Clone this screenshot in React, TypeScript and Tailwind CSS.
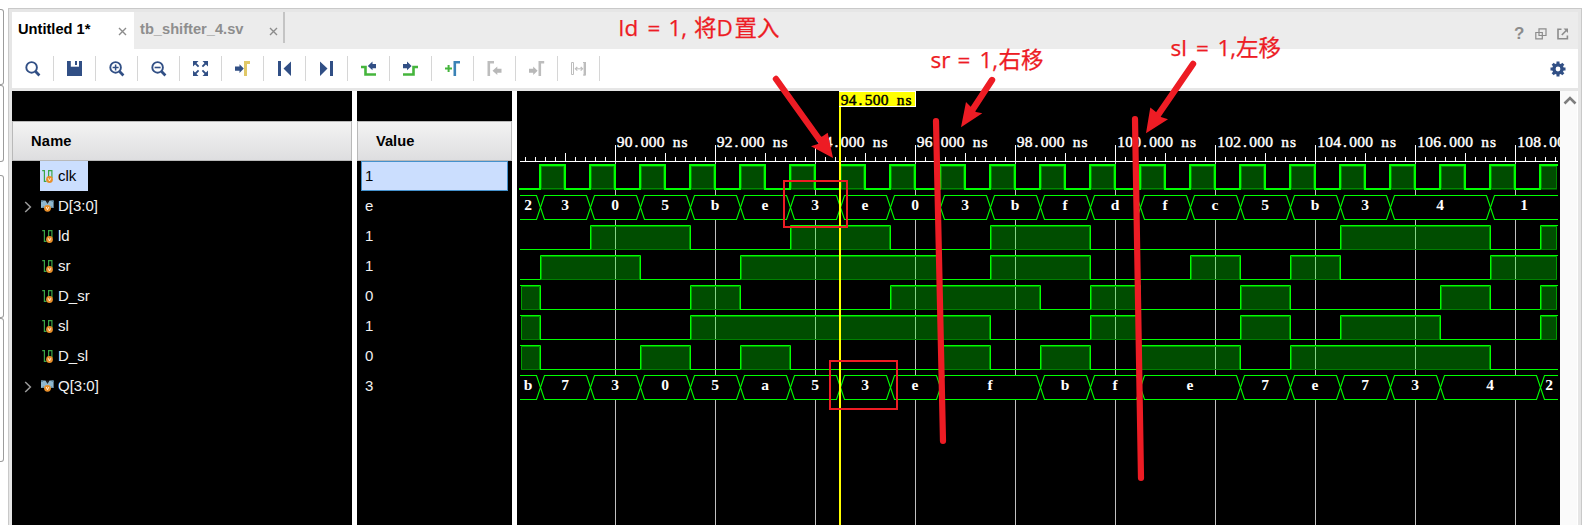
import React from 'react';

const NAVY = '#314f85';
const SERIF = '"Liberation Serif", serif';

/* ---------- toolbar icons (16 x 16 grid) ---------- */

const Lens = ({ children }: { children?: React.ReactNode }) => (
  <g stroke={NAVY} fill="none">
    <circle cx="6.6" cy="6.4" r="5.3" strokeWidth="1.9" />
    <path d="M10.6 10.6 L14.4 14.4" strokeWidth="2.8" />
    {children}
  </g>
);

const icons: React.ReactNode[] = [
  <Lens />,
  <g>
    <path d="M0 0 H15 V15 H0 Z" fill={NAVY} />
    <path d="M3.8 0 H12 V5.7 H3.8 Z" fill="#fff" />
    <path d="M8 0 H10 V4 H8 Z" fill={NAVY} />
  </g>,
  <Lens>
    <path d="M3.6 6.5 H9.6 M6.6 3.5 V9.5" strokeWidth="1.5" />
  </Lens>,
  <Lens>
    <path d="M3.6 6.5 H9.6" strokeWidth="1.6" />
  </Lens>,
  <g fill={NAVY} stroke={NAVY}>
    <path stroke="none" d="M0 0H5.5L0 5.5Z M15 0V5.5L9.5 0Z M0 15V9.5L5.5 15Z M15 15H9.5L15 9.5Z" />
    <path strokeWidth="1.8" d="M2 2L5.6 5.6M13 2L9.4 5.6M2 13L5.6 9.4M13 13L9.4 9.4" />
  </g>,
  <g>
    <path d="M0 5.5H4.5V3.3L8.8 7.6L4.5 12V9.8H0Z" fill={NAVY} />
    <path d="M10.5 15V1.5H15" stroke="#e0c868" strokeWidth="3" fill="none" />
  </g>,
  <path d="M1 0H4V15H1Z M14 0.5V15L6.5 7.5Z" fill={NAVY} />,
  <path d="M14 0H11V15H14Z M1 0.5V15L8.5 7.5Z" fill={NAVY} />,
  <g>
    <path d="M0 6H4.5V13.5H15" stroke="#45b53c" strokeWidth="2.6" fill="none" />
    <path d="M15 2.9H11.5V0.6L6.8 5L11.5 9.2V7.2H15Z" fill={NAVY} />
  </g>,
  <g>
    <path d="M0 13.5H10.5V6H15" stroke="#45b53c" strokeWidth="2.6" fill="none" />
    <path d="M0 2.9H4V0.6L8.6 5L4 9.2V7.2H0Z" fill={NAVY} />
  </g>,
  <g fill="none">
    <path d="M0 7.5H7M3.6 4V11" stroke="#45b53c" strokeWidth="2" />
    <path d="M9.8 15V1.3H15" stroke="#3a82b6" strokeWidth="2.6" />
  </g>,
  <g>
    <path d="M1.8 15V1.3H7" stroke="#bdbdbd" strokeWidth="2.6" fill="none" />
    <path d="M14.5 7.8H10.3V5.5L5.5 9.8L10.3 14V11.8H14.5Z" fill="#b8b8b8" />
  </g>,
  <g>
    <path d="M10.8 15V1.3H15.2" stroke="#bdbdbd" strokeWidth="2.6" fill="none" />
    <path d="M0 7.8H4.2V5.5L8.6 9.8L4.2 14V11.8H0Z" fill="#b8b8b8" />
  </g>,
  <g stroke="#bdbdbd" fill="none">
    <path d="M0.5 1.5H2.5V13.5H0.5Z M4.5 7.8H11" />
    <path d="M6.3 6L4.4 7.8L6.3 9.6M9.7 6L11.5 7.8L9.7 9.6" strokeWidth="1.2" />
    <path d="M13.8 1V14.5" strokeWidth="2.4" />
    <path d="M12 1.5H14M12 14H14" />
  </g>,
];

const Toolbar = () => (
  <div className="flex h-[39px] items-center bg-white">
    {icons.map((icon, i) => (
      <div key={i} className="flex h-[25px] w-[42px] items-center border-r border-[#d6d6d6] pl-[13px]">
        <svg width="16" height="16" viewBox="0 0 16 16" className="mt-px">
          {icon}
        </svg>
      </div>
    ))}
    <svg width="16" height="16" viewBox="-8 -8 16 16" className="mr-[12px] ml-auto">
      <circle r="4.1" fill="none" stroke={NAVY} strokeWidth="3.4" />
      {[0, 45, 90, 135, 180, 225, 270, 315].map((a) => (
        <rect key={a} x="-1.5" y="-7.5" width="3" height="3" fill={NAVY} transform={`rotate(${a})`} />
      ))}
    </svg>
  </div>
);

const Close = () => (
  <svg width="9" height="9" viewBox="0 0 9 9" className="mt-[4px]">
    <path d="M1 1L8 8M8 1L1 8" stroke="#8c8c8c" strokeWidth="1.4" />
  </svg>
);

const TabStrip = () => (
  <div className="flex h-[37px] bg-[#ececec] text-[14.67px] font-bold whitespace-nowrap">
    <div className="flex w-[122px] items-center justify-between bg-white pr-[7px] pb-[3px] pl-[6px] text-black">
      <span>Untitled 1*</span>
      <Close />
    </div>
    <div className="flex w-[149px] items-center justify-between pr-[5px] pb-[3px] pl-[6px] text-[#8e8e8e]">
      <span>tb_shifter_4.sv</span>
      <Close />
    </div>
    <div className="h-[31px] w-[2px] bg-[#c4c4c4]" />
    <div className="mt-[16px] mr-[9px] ml-auto flex h-[12px] items-center text-[#8c8c8c]">
      <span className="w-[21px] text-[17px] leading-[12px]">?</span>
      <svg width="12" height="12" viewBox="0 0 12 12" className="mr-[10px]" fill="none" stroke="#8c8c8c" strokeWidth="1.2">
        <path d="M4 0.9H11V7.5H4Z M0.8 4.5H7.3V10.8H0.8Z" />
      </svg>
      <svg width="12" height="12" viewBox="0 0 12 12" fill="none" stroke="#8c8c8c" strokeWidth="1.6">
        <path d="M4.5 1.2H1V10.8H10.4V7.5" />
        <path d="M4.8 7L9.5 2.3" />
        <path d="M6.5 0.4H11V5Z" fill="#8c8c8c" stroke="none" />
      </svg>
    </div>
  </div>
);

/* ---------- signal list ---------- */

const signals = [
  { name: 'clk', value: '1', bus: false },
  { name: 'D[3:0]', value: 'e', bus: true },
  { name: 'ld', value: '1', bus: false },
  { name: 'sr', value: '1', bus: false },
  { name: 'D_sr', value: '0', bus: false },
  { name: 'sl', value: '1', bus: false },
  { name: 'D_sl', value: '0', bus: false },
  { name: 'Q[3:0]', value: '3', bus: true },
];

const SignalIcon = ({ bus }: { bus: boolean }) => (
  <svg width="14" height="14" viewBox="0 0 14 14" className="mr-[4px] ml-[1px]">
    {bus ? (
      <g>
        <path d="M0 1.5H4.5L6.5 4L8.5 1.5H12.6V9H0Z" fill="#8fb8cf" />
        <path d="M4.5 1.5H8.5L6.5 5Z" fill="#222" />
        <path d="M0 1.5H2V3H0Z M10.6 1.5H12.6V3H10.6Z" fill="#5f8ba6" />
        <path d="M0 9L3 7V9Z M12.6 9L10 7V9Z" fill="#5f8ba6" />
      </g>
    ) : (
      <path d="M1.2 1.6H3.4V12.4H5.5M7.6 9V1.6H10.9V9" fill="none" stroke="#3aa648" strokeWidth="1.2" />
    )}
    <circle cx={bus ? 6.5 : 8.5} cy={bus ? 9.3 : 10.5} r="3.4" fill="#e88f2a" />
    <path
      d={bus ? 'M5.2 8L6.5 10.8L7.8 8' : 'M7.2 9.2L8.5 12L9.8 9.2'}
      fill="none"
      stroke="#fff3e0"
      strokeWidth="0.9"
    />
  </svg>
);

const Header = ({ label, pad }: { label: string; pad: string }) => (
  <div
    className={`flex h-[40px] items-center border border-[#b9b9b9] bg-linear-to-b from-[#f3f3f3] to-[#dedee0] text-[14.67px] font-bold text-black ${pad}`}
  >
    {label}
  </div>
);

const NamePanel = () => (
  <div className="w-[340px] bg-black pt-[30px]">
    <Header label="Name" pad="pl-[18px] tracking-[0.2px]" />
    {signals.map((s, i) => (
      <div key={s.name} className="flex h-[30px] items-center">
        <div className="flex w-[28px] justify-center pt-px">
          {s.bus && (
            <svg width="8" height="12" viewBox="0 0 8 12" className="ml-[4px]">
              <path d="M1.2 1L6.4 6L1.2 11" fill="none" stroke="#9a9a9a" strokeWidth="1.5" />
            </svg>
          )}
        </div>
        <div
          className={
            i === 0
              ? 'flex h-[30px] w-[48px] items-center bg-[#cbdefe] text-black'
              : 'flex h-[30px] items-center text-[#f2f2f2]'
          }
        >
          <SignalIcon bus={s.bus} />
          <span className="-ml-[1px] text-[15px]">{s.name}</span>
        </div>
      </div>
    ))}
  </div>
);

const ValuePanel = () => (
  <div className="w-[155px] bg-black pt-[30px]">
    <Header label="Value" pad="pl-[18px]" />
    {signals.map((s, i) => (
      <div
        key={s.name}
        className={
          i === 0
            ? 'mr-[4px] ml-[4px] flex h-[30px] items-center border border-[#4591cc] bg-[#cbdefe] pl-[3px] text-[15px] text-black'
            : 'ml-[4px] flex h-[30px] items-center pl-[4px] text-[15px] text-[#f2f2f2]'
        }
      >
        {s.value}
      </div>
    ))}
  </div>
);

/* ---------- waveform ---------- */

const START = 520;
const END = 1558;

/* Fixed-pitch label: each character is centred in its own cell. */
const Mono = ({
  x,
  y,
  text,
  fill = '#fff',
  bold = true,
}: {
  x: number;
  y: number;
  text: string;
  fill?: string;
  bold?: boolean;
}) => (
  <text
    x={text.split('').map((_, i) => x + 4 + i * 8).join(' ')}
    y={y}
    textAnchor="middle"
    fill={fill}
    stroke={bold ? 'none' : fill}
    strokeWidth={bold ? 0 : 0.45}
    fontFamily={SERIF}
    fontSize="15.5"
    fontWeight={bold ? 'bold' : 'normal'}
  >
    {text}
  </text>
);

const Level = ({ top, highs }: { top: number; highs: [number, number][] }) => {
  const t = top + 0.5;
  const b = top + 24.5;
  let d = '';
  let x = START;
  highs.forEach(([a, z]) => {
    if (a > START) d += `M${x} ${b}H${a + 0.5}V${t}`;
    else d += `M${a} ${t}`;
    d += z < END ? `H${z + 0.5}V${b}` : `H${END}`;
    x = z;
  });
  if (x < END) d += `M${x} ${b}H${END}`;
  return (
    <g>
      <path d={d} fill="none" stroke="#00ff00" />
      {highs.map(([a, z]) => {
        const l = a + 1;
        const r = z < END ? z : END - 1;
        return (
          <g key={a}>
            <rect x={l} y={top + 1} width={r - l} height={24} fill="#00ff00" fillOpacity="0.3" />
            <path d={`M${l + 0.5} ${b}V${t + 1}H${r - 0.5}V${b}`} fill="none" stroke="#00a000" />
            <path d={`M${l} ${b}H${r}`} fill="none" stroke="#008000" />
          </g>
        );
      })}
    </g>
  );
};

const Clock = () => {
  const rises = Array.from({ length: 21 }, (_, i) => 540 + i * 50);
  let d = `M519 189H540`;
  rises.forEach((x) => {
    d += `V165`;
    d += x + 25 < END ? `H${x + 25}V189H${x + 50 < END ? x + 50 : END}` : `H${END}`;
  });
  return (
    <g>
      {rises.map((x) => {
        const w = Math.min(x + 25, END) - x - 2;
        return (
          <g key={x}>
            <rect x={x + 1} y={166} width={w} height={24} fill="#004c00" />
            <rect x={x + 1.5} y={166.5} width={w - 1} height={22} fill="none" stroke="#008a00" />
          </g>
        );
      })}
      <path d={d} fill="none" stroke="#00ff00" strokeWidth="2" />
    </g>
  );
};

const Bus = ({ top, cells }: { top: number; cells: [number, string][] }) => {
  const t = top + 0.5;
  const b = top + 24.5;
  const m = top + 12.5;
  return (
    <g>
      <rect x={START} y={top} width={END - START} height={25} fill="#000" />
      {cells.map(([a, label], i) => {
        const z = i + 1 < cells.length ? cells[i + 1][0] : END;
        const first = i === 0;
        const last = i === cells.length - 1;
        const side = (y: number) =>
          (first ? `M${START} ${y}` : `M${a + 0.5} ${m}L${a + 4.5} ${y}`) +
          (last ? `H${END}` : `H${z - 3.5}L${z + 0.5} ${m}`);
        const cx = last ? (a + 4 + END) / 2 - 2 : (a + z) / 2;
        return (
          <g key={a}>
            <path d={side(t) + side(b)} fill="none" stroke="#00ff00" strokeWidth="1.1" />
            <Mono x={Math.round(cx) - 4} y={top + 15} text={label} />
          </g>
        );
      })}
    </g>
  );
};

const marks = Array.from({ length: 10 }, (_, i) => 615 + i * 100);

const Waveform = () => (
  <svg width="1043" height="434" viewBox="517 91 1043 434" className="bg-black">
    {marks.map((x, i) => (
      <g key={x}>
        <rect x={x} y={162} width="1" height="370" fill="#c0c0c0" />
        <rect x={x} y={145} width="1" height="17" fill="#fff" />
        <Mono x={x + (i < 5 ? 1.5 : 2)} y={147} text={`${90 + i * 2}.000 ns`} bold={false} />
      </g>
    ))}
    <rect x={START} y={161} width={END - START} height="1" fill="#fff" />
    {Array.from({ length: 104 }, (_, i) => 525 + i * 10).map((x) =>
      (x - 515) % 100 === 0 ? null : (
        <rect key={x} x={x} y={(x - 515) % 50 === 0 ? 153 : 157} width="1" height={(x - 515) % 50 === 0 ? 8 : 4} fill="#fff" />
      ),
    )}
    <Clock />
    <Bus
      top={195}
      cells={[
        [516, '2'], [540, '3'], [590, '0'], [640, '5'], [690, 'b'], [740, 'e'], [790, '3'], [840, 'e'], [890, '0'], [940, '3'],
        [990, 'b'], [1040, 'f'], [1090, 'd'], [1140, 'f'], [1190, 'c'], [1240, '5'], [1290, 'b'], [1340, '3'], [1390, '4'], [1490, '1'],
      ]}
    />
    <Level top={225} highs={[[590, 690], [790, 890], [990, 1090], [1340, 1490], [1540, END]]} />
    <Level top={255} highs={[[540, 640], [740, 940], [990, 1090], [1190, 1240], [1290, 1340], [1490, END]]} />
    <Level top={285} highs={[[START, 540], [690, 740], [890, 1040], [1090, 1140], [1240, 1290], [1440, 1490], [1540, END]]} />
    <Level top={315} highs={[[START, 540], [690, 990], [1090, 1140], [1240, 1290], [1340, 1440], [1540, END]]} />
    <Level top={345} highs={[[START, 540], [640, 690], [740, 790], [940, 990], [1040, 1090], [1140, 1240], [1290, 1490]]} />
    <Bus
      top={375}
      cells={[
        [516, 'b'], [540, '7'], [590, '3'], [640, '0'], [690, '5'], [740, 'a'], [790, '5'], [840, '3'], [890, 'e'], [940, 'f'],
        [1040, 'b'], [1090, 'f'], [1140, 'e'], [1240, '7'], [1290, 'e'], [1340, '7'], [1390, '3'], [1440, '4'], [1540, '2'],
      ]}
    />
    <rect x="839" y="91" width="2" height="434" fill="#ffff00" />
    <rect x="839" y="91" width="77" height="16" fill="#fff" />
    <rect x="839" y="92" width="76" height="14" fill="#ffff00" />
    <Mono x={840.5} y={105} text="94.500 ns" fill="#000" bold={false} />
  </svg>
);

/* ---------- hand-made notes over the window ---------- */

const RED = '#ed1c24';

const Arrow = ({ from, to, head }: { from: [number, number]; to: [number, number]; head: string }) => (
  <g>
    <path d={`M${from.join(' ')}L${to.join(' ')}`} stroke={RED} strokeWidth="6.4" strokeLinecap="round" />
    <polygon points={head} fill={RED} />
  </g>
);

const Notes = () => (
  <svg width="1589" height="525" viewBox="0 0 1589 525" className="pointer-events-none absolute top-0 left-0">
    <g fill={RED} stroke={RED} strokeWidth="0.25" fontSize="22.5" fontFamily='"Open Sans", "Noto Sans CJK SC", sans-serif'>
      <text y="36">
        <tspan x="618.5">l</tspan>
        <tspan x="624.5">d</tspan>
        <tspan x="647.5">=</tspan>
        <tspan x="668.5">1,</tspan>
        <tspan x="694">将</tspan>
        <tspan x="716.5">D</tspan>
        <tspan x="734.5">置入</tspan>
      </text>
      <text y="67.5">
        <tspan x="930.5">sr</tspan>
        <tspan x="957.5">=</tspan>
        <tspan x="979.5">1,</tspan>
        <tspan x="998.5">右移</tspan>
      </text>
      <text y="56">
        <tspan x="1170.5">sl</tspan>
        <tspan x="1196">=</tspan>
        <tspan x="1217.5">1,</tspan>
        <tspan x="1236">左移</tspan>
      </text>
    </g>
    <path d="M936 121L943 441M1135 119L1141 478" stroke={RED} strokeWidth="6.2" strokeLinecap="round" />
    <Arrow from={[776, 79]} to={[819, 139]} head="833,158 827.7,132.7 820,138 818,144 811,146.3" />
    <Arrow from={[992, 80]} to={[973, 109]} head="961,127.3 966,102 971,107 976,112 982.3,113.3" />
    <Arrow from={[1193, 64]} to={[1158, 115]} head="1146,133.3 1150.3,107.5 1156,112 1161,117 1168,119.3" />
    <g fill="none" stroke={RED} strokeWidth="2">
      <rect x="784" y="181" width="63" height="46" />
      <rect x="830" y="361" width="67" height="48" />
    </g>
  </svg>
);

/* Edge of the neighbouring pane on the far left. */
const SideEdge = () => (
  <div className="flex w-[8px] flex-col pt-[9px]">
    <div className="h-[76px] w-[4px] rounded-r-[3px] border border-l-0 border-[#9c9c9c]" />
    <div className="h-[77px] w-[4px] rounded-r-[3px] border border-l-0 border-[#9c9c9c]" />
    <div className="mt-[13px] h-[143px] w-[4px] rounded-r-[3px] border border-l-0 border-[#9c9c9c]" />
    <div className="h-[144px] w-[4px] rounded-r-[3px] border border-l-0 border-[#9c9c9c]" />
  </div>
);

export default function App() {
  return (
    <div className="relative flex h-[525px] w-[1589px] overflow-hidden bg-white font-['Liberation_Sans',Arial,sans-serif]">
      <SideEdge />
      <div className="mt-[8px] flex w-[1574px] flex-col border-x border-t border-[#c9c9c9] bg-[#e6e6e6] pt-[3px] pr-[3px] pl-[3px]">
        <TabStrip />
        <Toolbar />
        <div className="mt-[3px] flex h-[434px] bg-white">
          <NamePanel />
          <div className="w-[5px]" />
          <ValuePanel />
          <div className="w-[5px]" />
          <Waveform />
          <div className="flex w-[17px] justify-center bg-[#fafafa] pt-[5px]">
            <svg width="14" height="9" viewBox="0 0 14 9" className="ml-[2px]">
              <path d="M1.5 7.5L7 2L12.5 7.5" fill="none" stroke="#7d7d7d" strokeWidth="2.6" />
            </svg>
          </div>
        </div>
      </div>
      <Notes />
    </div>
  );
}
